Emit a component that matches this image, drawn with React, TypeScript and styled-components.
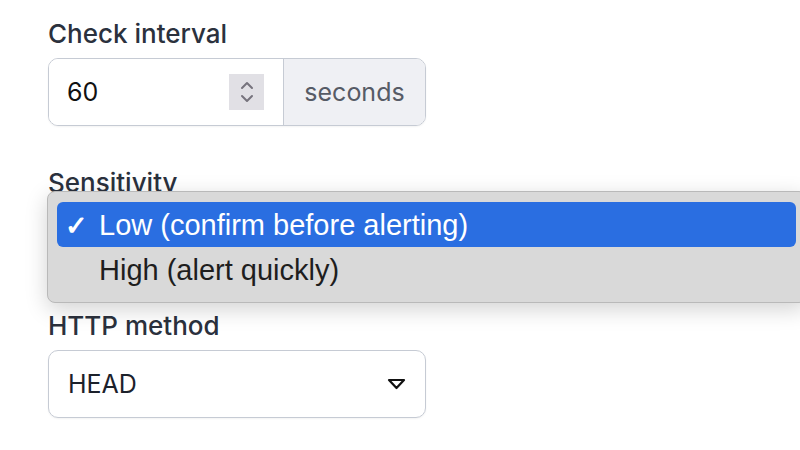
import React from "react";
import styled, { createGlobalStyle } from "styled-components";

const Global = createGlobalStyle`
  html, body { margin: 0; padding: 0; background: #ffffff; }
  body { width: 800px; height: 450px; overflow: hidden; }
`;

const Page = styled.div`
  position: relative;
  width: 800px;
  height: 450px;
  padding: 17px 0 0 48px;
  box-sizing: border-box;
  font-family: "Inter", "Open Sans", sans-serif;
  display: flex;
  flex-direction: column;
`;

const Field = styled.div<{ $mb: number }>`
  display: flex;
  flex-direction: column;
  margin-bottom: ${(p) => p.$mb}px;
`;

const Label = styled.label`
  font-size: 26px;
  line-height: 34px;
  font-weight: 500;
  color: #2b313d;
  margin-bottom: 7px;
`;

const Group = styled.div`
  display: flex;
  width: 378px;
  height: 68px;
  border: 1.5px solid #c6cbd4;
  border-radius: 10px;
  box-sizing: border-box;
  overflow: hidden;
  box-shadow: 0 1px 2px rgba(0, 0, 0, 0.05);
`;

const InputPart = styled.div`
  flex: 1;
  display: flex;
  align-items: center;
  padding: 0 19px 0 18px;
  background: #fff;
  font-size: 25px;
  color: #111;
`;

const Value = styled.span`
  flex: 1;
`;

const Spinner = styled.div`
  width: 35px;
  height: 36px;
  background: #e1e0e5;
  display: flex;
  align-items: center;
  justify-content: center;
`;

const Addon = styled.div`
  width: 141px;
  border-left: 1.5px solid #c6cbd4;
  background: #eff0f4;
  display: flex;
  align-items: center;
  justify-content: center;
  font-size: 25px;
  color: #565b66;
`;

const SelectBox = styled.div`
  width: 378px;
  height: 68px;
  border: 1.5px solid #c6cbd4;
  border-radius: 10px;
  box-sizing: border-box;
  display: flex;
  align-items: center;
  padding: 0 19px 0 19px;
  font-size: 25px;
  color: #1c212b;
  box-shadow: 0 1px 2px rgba(0, 0, 0, 0.05);
`;

const SelectValue = styled.span`
  flex: 1;
`;

const Menu = styled.div`
  position: absolute;
  left: 47px;
  top: 191px;
  width: 760px;
  height: 112px;
  box-sizing: border-box;
  background: #d9d9d9;
  border: 1px solid #b9b9b9;
  border-radius: 8px;
  box-shadow: 0 6px 22px rgba(0, 0, 0, 0.18);
  padding: 10px 11px 0 9px;
  font-family: "Liberation Sans", "Roboto", sans-serif;
  font-size: 29px;
  display: flex;
  flex-direction: column;
`;

const Option = styled.div<{ $active?: boolean }>`
  height: 45px;
  width: 739px;
  border-radius: 6px;
  display: flex;
  align-items: center;
  padding-top: 2px;
  box-sizing: border-box;
  background: ${(p) => (p.$active ? "#2a6ee1" : "transparent")};
  color: ${(p) => (p.$active ? "#ffffff" : "#1e1e1e")};
`;

const Check = styled.span`
  width: 42px;
  padding-left: 8px;
  box-sizing: border-box;
  font-weight: 700;
  font-size: 27px;
`;

const MenuSpacer = styled.div`
  height: 102px;
`;

export default function App() {
  return (
    <>
      <Global />
      <Page>
        <Field $mb={40}>
          <Label>Check interval</Label>
          <Group>
            <InputPart>
              <Value>60</Value>
              <Spinner>
                <svg width="16" height="26" viewBox="0 0 16 26" fill="none" stroke="#76737d" strokeWidth="2" strokeLinecap="round" strokeLinejoin="round">
                  <path d="M3 9 L8 4 L13 9" />
                  <path d="M3 17 L8 22 L13 17" />
                </svg>
              </Spinner>
            </InputPart>
            <Addon>seconds</Addon>
          </Group>
        </Field>
        <Field $mb={0}>
          <Label>Sensitivity</Label>
          <MenuSpacer />
        </Field>
        <Field $mb={0}>
          <Label>HTTP method</Label>
          <SelectBox>
            <SelectValue>HEAD</SelectValue>
            <svg width="19" height="12" viewBox="0 0 19 12" fill="none" stroke="#111" strokeWidth="2.2" strokeLinejoin="round">
              <path d="M2 2 H17 L9.5 10 Z" />
            </svg>
          </SelectBox>
        </Field>
        <Menu>
          <Option $active>
            <Check>✓</Check>
            Low (confirm before alerting)
          </Option>
          <Option>
            <Check />
            High (alert quickly)
          </Option>
        </Menu>
      </Page>
    </>
  );
}
